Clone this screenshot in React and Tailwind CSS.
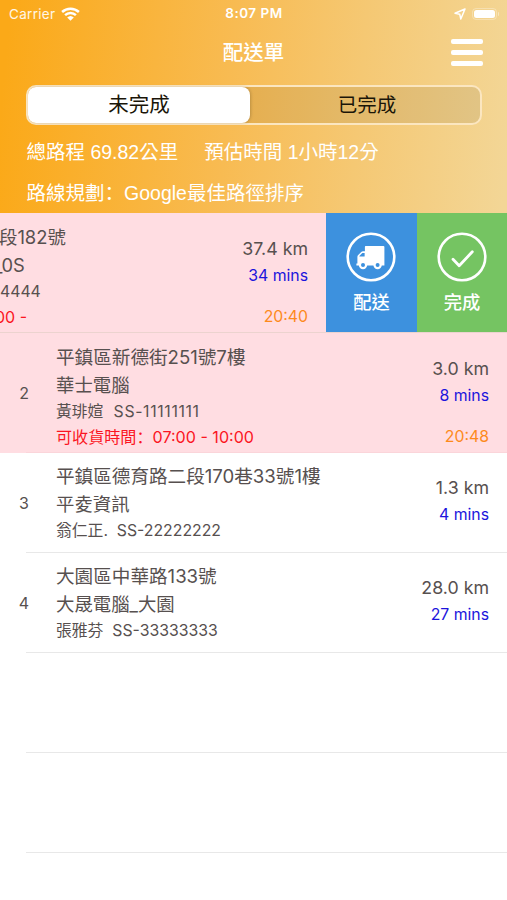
import React from "react";

const ui = "font-['Inter','Noto_Sans_CJK_TC',sans-serif]";
const classic = "font-['Liberation_Sans','Noto_Sans_CJK_TC',sans-serif]";

function Colon() {
  return <span className="font-['Noto_Sans_CJK_SC']" lang="zh-CN">：</span>;
}

function StatusBar() {
  return (
    <div className="flex h-[28px] items-center justify-between pl-[9px] pr-[8px] text-[13.5px] leading-none text-white">
      <div className="flex w-[160px] items-center gap-[6px]">
        <span className="pt-px tracking-[0.3px] text-white/90">Carrier</span>
        <svg width="19" height="14" viewBox="0 0 19 14" fill="none" stroke="#fff" strokeWidth="2.5">
          <path d="M1.1 5C5.8.5 13.2.5 17.9 5" />
          <path d="M4.1 8.2c3-2.9 7.8-2.9 10.8 0" />
          <path d="M9.5 13.7 6.2 10.5a4.8 4.8 0 0 1 6.6 0z" fill="#fff" stroke="none" />
        </svg>
      </div>
      <span className="font-semibold tracking-[0.5px]">8:07 PM</span>
      <div className="flex w-[160px] items-center justify-end gap-[6px]">
        <svg width="12" height="12" viewBox="0 0 12 12" fill="none" stroke="#fff" strokeWidth="1.5" strokeLinejoin="round">
          <path d="M11 1 1 5.3l4.7.9L6.8 11z" />
        </svg>
        <div className="flex items-center gap-px">
          <div className="h-[12px] w-[25px] rounded-[4px] border border-white/30 p-px">
            <div className="h-full w-full rounded-[2.5px] bg-white" />
          </div>
          <div className="h-[4px] w-[1.5px] rounded-r bg-white/40" />
        </div>
      </div>
    </div>
  );
}

function Header() {
  return (
    <header className="h-[213px] bg-[linear-gradient(95deg,#fba918_2%,#f8bb52_45%,#f5c873_70%,#f3d696_99%)]">
      <StatusBar />
      <div className="grid h-[48px] grid-cols-[1fr_auto_1fr] items-center px-[24px]">
        <span />
        <h1 className="pt-[2px] text-[20.5px] font-medium leading-none text-white">配送單</h1>
        <div className="flex flex-col gap-[6px] justify-self-end">
          <i className="h-[5px] w-[32px] rounded-[2px] bg-white" />
          <i className="h-[5px] w-[32px] rounded-[2px] bg-white" />
          <i className="h-[5px] w-[32px] rounded-[2px] bg-white" />
        </div>
      </div>
      <div className="ml-[26px] mt-[9px] flex h-[40px] w-[456px] rounded-[10px] border-2 border-[#fbe6c0] bg-black/[0.07] text-[20.5px] text-[#1a1508]">
        <div className="flex w-[222px] items-center justify-center rounded-[8px] bg-white pt-px shadow-[1px_0_3px_rgba(0,0,0,0.18)]">未完成</div>
        <div className="flex flex-1 items-center justify-center pl-[4px] pt-px text-[19.5px]">已完成</div>
      </div>
      <div className={`mt-[7px] pl-[26.5px] text-[19.5px] leading-[40px] text-white ${classic}`}>
        <div className="flex h-[40px] gap-[26px] whitespace-nowrap">
          <span>總路程 69.82公里</span>
          <span>預估時間 1小時12分</span>
        </div>
        <div className="h-[40px]">路線規劃<Colon />Google最佳路徑排序</div>
      </div>
    </header>
  );
}

function Distance({ km, mins, eta, tight }) {
  return (
    <div className={`flex flex-col items-end whitespace-nowrap ${tight ? "pt-[21px]" : "pt-[22px]"}`}>
      <span className="h-[27px] text-[17.8px] leading-[27px]">{km}</span>
      <span className="h-[26px] text-[15.8px] leading-[28px] text-[#1c14dc]">{mins}</span>
      {eta && <span className="mt-[16px] h-[25px] text-[15.8px] leading-[26px] text-[#fd8a1c]">{eta}</span>}
    </div>
  );
}

function Row({ n, address, company, person, code, time, pink, ...distance }) {
  return (
    <li className={`flex ${pink ? "h-[120px] bg-[#ffdde2]" : "h-[100px]"}`}>
      <div className="flex w-[26px] items-center justify-end text-[16px]">
        <span className="-mr-[3px]">{n}</span>
      </div>
      <div className={`flex flex-1 justify-between border-b pl-[30px] pr-[18px] ${pink ? "border-[#fbd5da]" : "border-[#e8e8e8]"}`}>
        <div className={`whitespace-nowrap ${pink ? "pt-[10px]" : "pt-[9px]"}`}>
          <div className="h-[28px] text-[18.6px] leading-[28px]">{address}</div>
          <div className="h-[27px] text-[18.4px] leading-[28px]">{company}</div>
          <div className="h-[26px] whitespace-pre text-[15.8px] leading-[28px]">
            {person}
            <span className={pink ? "tracking-[0.65px]" : ""}>{"  " + code}</span>
          </div>
          {time && (
            <div className="h-[25px] text-[16.1px] leading-[24px] text-[#fb1522]">
              可收貨時間<Colon />{time}
            </div>
          )}
        </div>
        <Distance tight={!pink} {...distance} />
      </div>
    </li>
  );
}

function SwipedRow() {
  return (
    <li className="flex h-[120px] border-b border-[#ecd3cf] bg-[#ffdde2]">
      <div className="flex w-[326px] justify-between pr-[18px]">
        <div className="whitespace-nowrap pt-[10px]">
          <div className="-ml-px h-[28px] text-[18.4px] leading-[28px]">段182號</div>
          <div className="-ml-[6px] h-[27px] text-[18.3px] leading-[28px]">_0S</div>
          <div className="h-[26px] text-[15.8px] leading-[28px]">4444</div>
          <div className="-ml-[5px] h-[25px] text-[16px] leading-[26px] text-[#fb1522]">00 -</div>
        </div>
        <Distance km="37.4 km" mins="34 mins" eta="20:40" />
      </div>
      <div className="flex w-[91px] flex-col items-center bg-[#3d91de] pt-[19px] text-[18.3px] font-medium text-white">
        <svg className="-ml-px" width="50" height="50" viewBox="0 0 50 50">
          <circle cx="25" cy="25" r="23.3" fill="none" stroke="#fff" strokeWidth="2.6" />
          <path fill="#fff" d="M19.8 14h17.6a1 1 0 0 1 1 1v18.4H10.4v-2h1v-6.6c0-.7.3-1.3.8-1.8l3-3c.5-.5 1.1-.8 1.8-.8h1.9V15c0-.5.4-1 .9-1z" />
          <path fill="#3d91de" d="M13.4 24.5V24l2.9-3h2.3v3.5z" />
          <g fill="#fff">
            <circle cx="17" cy="33" r="4.2" />
            <circle cx="31.6" cy="33" r="4.2" />
          </g>
          <g fill="#3d91de">
            <circle cx="17" cy="33" r="2" />
            <circle cx="31.6" cy="33" r="2" />
          </g>
        </svg>
        <span className="mt-[6px] leading-[28px]">配送</span>
      </div>
      <div className="flex w-[90px] flex-col items-center bg-[#75c462] pt-[19px] text-[18.3px] font-medium text-white">
        <svg width="50" height="50" viewBox="0 0 50 50" fill="none" stroke="#fff" strokeLinecap="round" strokeLinejoin="round">
          <circle cx="25" cy="25" r="23.3" strokeWidth="2.6" />
          <path d="m16 27.3 6.2 6.4L35.3 19.8" strokeWidth="2.8" />
        </svg>
        <span className="mt-[6px] leading-[28px]">完成</span>
      </div>
    </li>
  );
}

export default function App() {
  return (
    <div className={`h-[900px] w-[507px] overflow-hidden bg-white text-[#57504f] ${ui}`}>
      <Header />
      <ul>
        <SwipedRow />
        <Row pink n="2" address="平鎮區新德街251號7樓" company="華士電腦" person="黃琲媗" code="SS-11111111" time="07:00 - 10:00" km="3.0 km" mins="8 mins" eta="20:48" />
        <Row n="3" address="平鎮區德育路二段170巷33號1樓" company="平夌資訊" person="翁仁正." code="SS-22222222" km="1.3 km" mins="4 mins" />
        <Row n="4" address="大園區中華路133號" company="大晟電腦_大園" person="張雅芬" code="SS-33333333" km="28.0 km" mins="27 mins" />
        <li className="ml-[26px] h-[100px] border-b border-[#e8e8e8]" />
        <li className="ml-[26px] h-[100px] border-b border-[#e8e8e8]" />
      </ul>
    </div>
  );
}
